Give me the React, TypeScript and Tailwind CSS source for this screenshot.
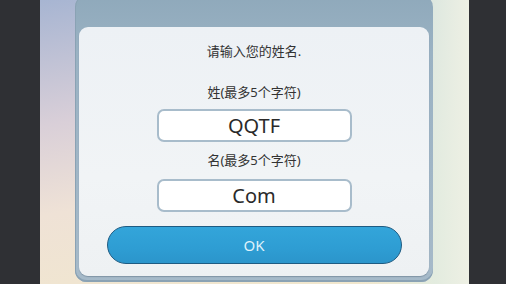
import React from 'react';

const font = { fontFamily: '"Noto Sans", "Noto Sans CJK SC", sans-serif' };

function NameField({ value }: { value: string }) {
  return (
    <div className="flex h-[33px] w-[195px] items-center justify-center rounded-[7px] border-2 border-[#a8bccb] bg-white text-[20px] leading-none text-[#2a2a2a]">
      {value}
    </div>
  );
}

export default function App() {
  return (
    <div className="flex h-[284px] w-[506px] overflow-hidden" style={font}>
      <div className="w-[40px] shrink-0 bg-[#2f3034]" />

      <div className="relative flex-1 bg-[linear-gradient(170deg,#a7b5d2_0%,#d9cfd8_35%,#efe2d6_60%,#f1e8cc_100%)]">
        <div className="absolute inset-0 bg-[linear-gradient(90deg,transparent_0%,transparent_75%,rgba(225,236,225,0.9)_92%,#eef0e4_100%)]" />

        {/* dialog frame */}
        <div className="relative ml-[35px] mt-[-5px] flex h-[287px] w-[358px] flex-col rounded-[12px] bg-[linear-gradient(180deg,#8fa9bb_0%,#9ab2c3_20%,#a6bac9_100%)] px-[4px] pb-[6px] pt-[32px] shadow-[inset_0_-2px_0_#8aa2b4,inset_1px_0_0_#8aa2b4]">
          <div className="flex flex-1 flex-col items-center rounded-[9px] bg-[linear-gradient(180deg,#edf1f5_0%,#f1f4f6_60%,#eef1f3_100%)] shadow-[0_1px_1px_rgba(60,80,100,0.35)]">
            <div className="mt-[16px] text-[13px] leading-[16px] text-[#333]">请输入您的姓名.</div>
            <div className="mt-[25px] text-[13px] leading-[16px] text-[#333]">姓(最多5个字符)</div>
            <div className="mt-[9px]">
              <NameField value="QQTF" />
            </div>
            <div className="mt-[10px] text-[13px] leading-[16px] text-[#333]">名(最多5个字符)</div>
            <div className="mt-[11px]">
              <NameField value="Com" />
            </div>
            <button className="mt-[14px] flex h-[38px] w-[295px] items-center justify-center rounded-full border-[1.5px] border-[#1e5b82] bg-[linear-gradient(180deg,#33a5da_0%,#2e9dd3_60%,#2b95cb_100%)] text-[15px] leading-none text-[#dff2fb]">
              OK
            </button>
          </div>
        </div>
      </div>

      <div className="w-[37px] shrink-0 bg-[#2f3034]" />
    </div>
  );
}
